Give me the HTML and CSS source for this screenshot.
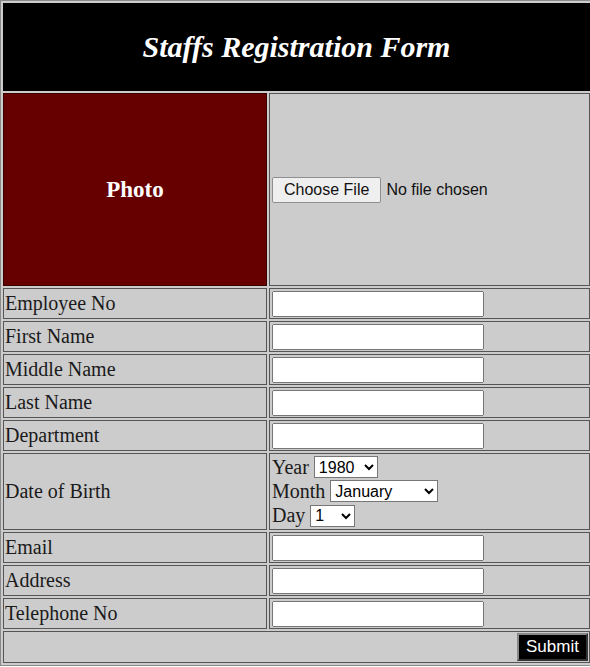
FILE: index.html
```html
<!DOCTYPE html>
<html>
<head>
<meta charset="utf-8">
<title>Staffs Registration Form</title>
<link rel="stylesheet" href="styles.css">
</head>
<body>
<form class="reg-form">
<table class="reg-table">
  <colgroup><col class="col-label"><col class="col-field"></colgroup>
  <tr class="row-head"><td colspan="2" class="head-cell"><span class="title">Staffs Registration Form</span></td></tr>
  <tr class="row-photo">
    <td class="photo-cell">Photo</td>
    <td class="field"><input type="file" class="file-in"></td>
  </tr>
  <tr class="row"><td class="label">Employee No</td><td class="field"><input type="text" class="text-in"></td></tr>
  <tr class="row"><td class="label">First Name</td><td class="field"><input type="text" class="text-in"></td></tr>
  <tr class="row"><td class="label">Middle Name</td><td class="field"><input type="text" class="text-in"></td></tr>
  <tr class="row"><td class="label">Last Name</td><td class="field"><input type="text" class="text-in"></td></tr>
  <tr class="row"><td class="label">Department</td><td class="field"><input type="text" class="text-in"></td></tr>
  <tr class="row-dob">
    <td class="label">Date of Birth</td>
    <td class="field">
      <div class="dob-line">Year <select class="sel sel-year"><option>1980</option><option>1981</option></select></div>
      <div class="dob-line">Month <select class="sel sel-month"><option>January</option><option>February</option><option>September</option></select></div>
      <div class="dob-line">Day <select class="sel sel-day"><option>1</option><option>2</option></select></div>
    </td>
  </tr>
  <tr class="row"><td class="label">Email</td><td class="field"><input type="text" class="text-in"></td></tr>
  <tr class="row"><td class="label">Address</td><td class="field"><input type="text" class="text-in"></td></tr>
  <tr class="row"><td class="label">Telephone No</td><td class="field"><input type="text" class="text-in"></td></tr>
  <tr class="row-submit"><td colspan="2" class="submit-cell"><button type="button" class="submit-btn">Submit</button></td></tr>
</table>
</form>
</body>
</html>
```
FILE: styles.css
```css
html, body {
  margin: 0;
  padding: 0;
  background: #ffffff;
  overflow: hidden;
}
.reg-form {
  margin: 0;
}
.reg-table {
  width: 593px;
  table-layout: fixed;
  border-collapse: separate;
  border-spacing: 2px;
  border: 1px solid #8a8a8a;
  background: #cccccc;
  font-family: "Liberation Serif", "Times New Roman", serif;
  font-size: 20px;
  color: #1a1a1a;
}
.col-label { width: 264px; }
.reg-table td {
  border: 1px solid #555555;
  padding: 1px;
  vertical-align: middle;
}
.reg-table td.field {
  padding-left: 2px;
}
.row-head { height: 88px; }
.head-cell {
  background: #000000;
  border-color: #000000 !important;
  text-align: center;
}
.title {
  color: #ffffff;
  font-weight: bold;
  font-style: italic;
  font-size: 30px;
}
.row-photo { height: 193px; }
.photo-cell {
  background: #660000;
  color: #ffffff;
  font-weight: bold;
  font-size: 23px;
  text-align: center;
  border-color: #3a0000 !important;
}
.file-in {
  display: block;
  font-family: "Liberation Sans", Arial, sans-serif;
  font-size: 16px;
  color: #111;
}
.file-in::file-selector-button {
  font-family: "Liberation Sans", Arial, sans-serif;
  font-size: 16px;
  height: 26px;
  padding: 1px 11px;
  margin-right: 5px;
  border: 1px solid #8f8f8f;
  border-radius: 2px;
  background: #efefef;
  color: #111;
}
.row { height: 31px; }
.row-dob { height: 77px; }
.row-submit { height: 32px; }
.text-in {
  display: block;
  box-sizing: border-box;
  width: 212px;
  height: 26px;
  margin: 0;
  font-family: "Liberation Sans", Arial, sans-serif;
  font-size: 16px;
}
.dob-line {
  display: flex;
  align-items: center;
  gap: 5px;
  height: 24.3px;
}
.sel {
  font-family: "Liberation Sans", Arial, sans-serif;
  font-size: 16px;
  height: 22px;
  padding: 0;
  background: #ffffff;
  color: #000;
}
.sel-year { width: 64px; }
.sel-month { width: 108px; }
.sel-day { width: 45px; }
.submit-cell {
  text-align: right;
}
.submit-btn {
  background: #000000;
  color: #ffffff;
  font-family: "Liberation Sans", Arial, sans-serif;
  font-size: 17px;
  height: 28px;
  width: 71px;
  border: 2px outset #888888;
  padding: 0 6px;
  margin: 0;
  vertical-align: middle;
}
```
